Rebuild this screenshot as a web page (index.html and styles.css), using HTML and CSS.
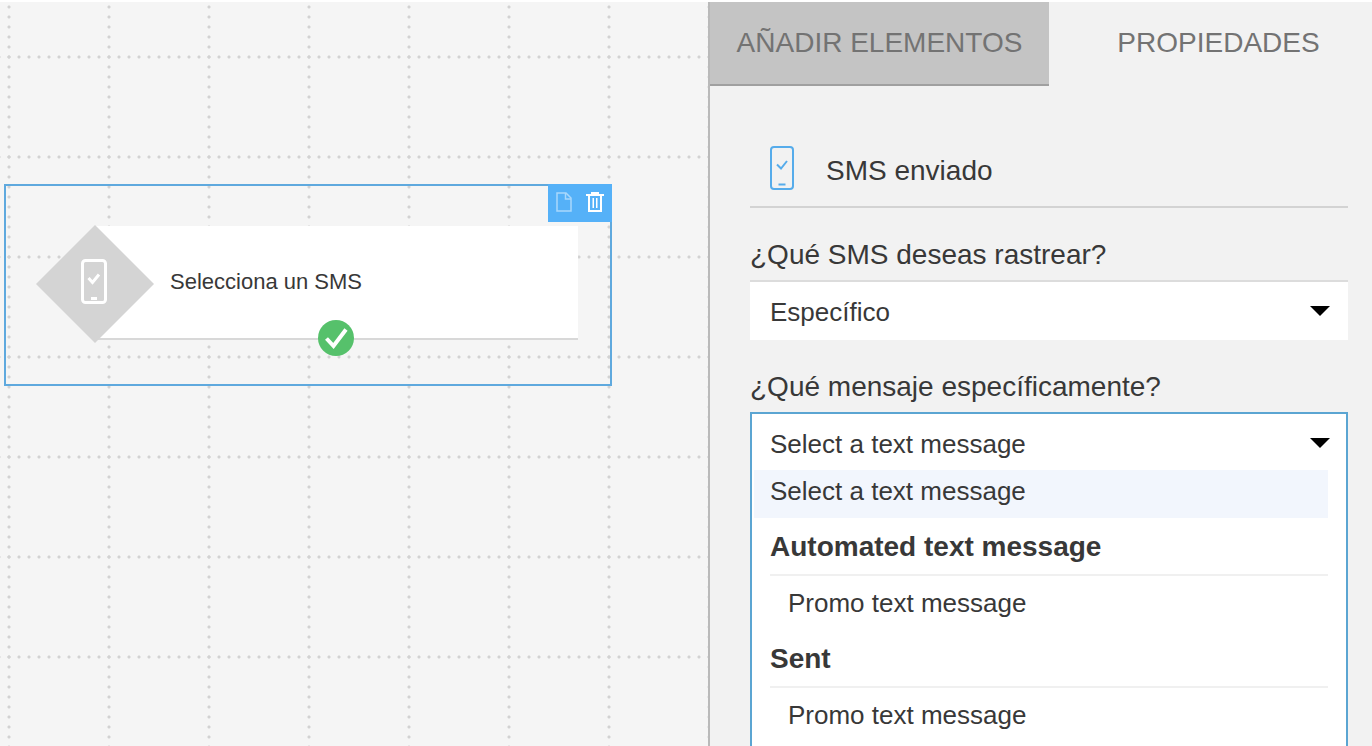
FILE: index.html
```html
<!DOCTYPE html>
<html lang="es">
<head>
    <meta charset="UTF-8">
    <meta name="viewport" content="width=device-width, initial-scale=1.0">
    <title>SMS enviado</title>
    <link rel="stylesheet" href="styles.css">
</head>
<body>
    <div class="editor">
        <main class="canvas">
            <div class="node">
                <div class="node-tools">
                    <button class="tool tool-copy" aria-label="Duplicar">
                        <svg width="16" height="20" viewBox="0 0 16 20" fill="none" stroke="currentColor" stroke-width="1.5">
                            <path d="M1 1H10L15 6V19H1Z"/>
                            <path d="M9.500 1V7H15"/>
                        </svg>
                    </button>
                    <button class="tool" aria-label="Eliminar">
                        <svg width="18" height="20" viewBox="0 0 18 20" fill="none" stroke="currentColor" stroke-width="2">
                            <path d="M0 3H18M6 3V1H12V3M3 3V19H15V3"/>
                            <path d="M7.250 6V16M10.750 6V16" stroke-width="1.500"/>
                        </svg>
                    </button>
                </div>
                <div class="node-card">Selecciona un SMS</div>
                <svg class="node-shape" width="120" height="120" viewBox="0 0 120 120" fill="none">
                    <path d="M60 1L119 60L60 119L1 60Z" fill="#d4d4d4"/>
                    <rect x="47.500" y="36.500" width="23" height="42" rx="3" stroke="#fff" stroke-width="3"/>
                    <path d="M53.500 54L57.500 58.500L64 50.500" stroke="#fff" stroke-width="3"/>
                    <path d="M56 74.500H62" stroke="#fff" stroke-width="3"/>
                </svg>
                <svg class="node-status" width="36" height="36" viewBox="0 0 36 36" fill="none">
                    <circle cx="18" cy="18" r="18" fill="#56c16b"/>
                    <path d="M8.500 18.500L15.500 26L28 9.500" stroke="#fff" stroke-width="4"/>
                </svg>
            </div>
        </main>

        <aside class="panel">
            <nav class="tabs">
                <button class="tab tab-inactive">AÑADIR ELEMENTOS</button>
                <button class="tab">PROPIEDADES</button>
            </nav>
            <div class="properties">
                <header class="properties-header">
                    <svg width="26" height="44" viewBox="0 0 26 44" fill="none" stroke="#56aceb" stroke-width="2">
                        <rect x="3" y="1" width="22" height="42" rx="3"/>
                        <path d="M9 18.500L13 22.500L19 15"/>
                        <path d="M10.500 38.500H17.500"/>
                    </svg>
                    <h1>SMS enviado</h1>
                </header>

                <label class="label" for="sms-type">¿Qué SMS deseas rastrear?</label>
                <div class="field">
                    <select id="sms-type">
                        <option>Específico</option>
                    </select>
                    <svg class="arrow" width="20" height="10" viewBox="0 0 20 10"><path d="M0 0H20L10 10Z"/></svg>
                </div>

                <label class="label" for="sms-message">¿Qué mensaje específicamente?</label>
                <div class="dropdown">
                    <div class="field">
                        <select id="sms-message">
                            <option>Select a text message</option>
                        </select>
                        <svg class="arrow" width="20" height="10" viewBox="0 0 20 10"><path d="M0 0H20L10 10Z"/></svg>
                    </div>
                    <div class="options" role="listbox" aria-label="Mensajes">
                        <div class="option selected" role="option" aria-selected="true">Select a text message</div>
                        <div class="group" role="group" aria-labelledby="group-automated">
                            <div class="group-title" id="group-automated">Automated text message</div>
                            <div class="option" role="option">Promo text message</div>
                        </div>
                        <div class="group" role="group" aria-labelledby="group-sent">
                            <div class="group-title" id="group-sent">Sent</div>
                            <div class="option" role="option">Promo text message</div>
                        </div>
                    </div>
                </div>
            </div>
        </aside>
    </div>
</body>
</html>
```
FILE: styles.css
```css
* {
    box-sizing: border-box;
}
body {
    margin: 0;
    font-family: "Liberation Sans", Arial, sans-serif;
    font-size: 28px;
    color: #383838;
    background: #fff;
}
button, select {
    font: inherit;
    color: inherit;
    border: none;
    border-radius: 0;
    background: none;
    padding: 0;
    margin: 0;
}
svg {
    display: block;
}
.editor {
    display: flex;
    height: 100vh;
    padding-top: 2px;
    overflow: hidden;
}

/* Canvas with dotted guides every 100px */
.canvas {
    position: relative;
    flex: 1;
    min-width: 0;
    background-color: #f5f5f5;
    background-image:
        radial-gradient(circle, #d2d2d2 1px, transparent 2px),
        radial-gradient(circle, #d2d2d2 1px, transparent 2px);
    background-size: 100px 10px, 10px 100px;
    background-position: -41px 0, 4px 5px;
}
.node {
    position: absolute;
    left: 4px;
    top: 182px;
    width: 608px;
    padding: 40px 32px 44px 90px;
    border: 2px solid #5fa9de;
}
.node-tools {
    position: absolute;
    top: -2px;
    right: -2px;
    display: flex;
    width: 64px;
    height: 38px;
    padding: 0 2px 2px 0;
    background: #55b1f8;
}
.tool {
    display: flex;
    flex: 1;
    align-items: center;
    justify-content: center;
    color: #fff;
    cursor: pointer;
}
.tool-copy {
    color: #a9d8fc;
}
.node-card {
    height: 114px;
    padding-left: 74px;
    line-height: 112px;
    font-size: 22px;
    background: #fff;
    border-bottom: 2px solid #d8d8d8;
}
.node-shape {
    position: absolute;
    left: 29px;
    top: 38px;
}
.node-status {
    position: absolute;
    left: 312px;
    top: 134px;
}

/* Side panel */
.panel {
    display: flex;
    flex-direction: column;
    flex: 0 0 664px;
    min-width: 0;
    background: #f2f2f2;
    border-left: 2px solid #b9b9b9;
    overflow: hidden;
}
.tabs {
    display: flex;
    overflow: hidden;
}
.tab {
    flex: 0 0 339px;
    height: 84px;
    padding-bottom: 2px;
    color: #737373;
    cursor: pointer;
}
.tab-inactive {
    padding-bottom: 0;
    background: #c4c4c4;
    border-bottom: 2px solid #a0a0a0;
}
.properties {
    display: flex;
    flex-direction: column;
    flex: 1;
    padding: 44px 24px 0 40px;
}
.properties-header {
    display: flex;
    align-items: center;
    gap: 32px;
    height: 78px;
    padding-left: 18px;
    border-bottom: 2px solid #d3d3d3;
}
.properties-header h1 {
    margin: 0;
    padding-top: 6px;
    font-size: 28px;
    font-weight: normal;
}
.label {
    height: 72px;
    padding-top: 30px;
    line-height: 34px;
}
.field {
    position: relative;
    height: 60px;
    background: #fff;
    border-top: 2px solid #dcdcdc;
}
.field select {
    appearance: none;
    display: block;
    width: 100%;
    height: 100%;
    padding: 2px 60px 0 20px;
    font-size: 26px;
    outline: none;
}
.arrow {
    position: absolute;
    right: 18px;
    top: 24px;
    pointer-events: none;
}

/* Open list, runs past the bottom of the panel */
.dropdown {
    flex: 1;
    background: #fff;
    border: 2px solid #5ba5d2;
    border-bottom: none;
}
.dropdown .field {
    height: 56px;
    border-top: none;
}
.dropdown .field select {
    padding: 4px 60px 0 18px;
}
.dropdown .arrow {
    right: 16px;
}
.options {
    padding: 0 18px 0 2px;
    font-size: 26px;
}
.option {
    height: 54px;
    padding-left: 34px;
    line-height: 54px;
}
.option.selected {
    height: 48px;
    padding-left: 16px;
    line-height: 42px;
    background: #f2f6fd;
}
.group-title {
    height: 58px;
    margin-left: 16px;
    font-size: 28px;
    font-weight: bold;
    line-height: 58px;
    border-bottom: 2px solid #f0f0f0;
}
```
